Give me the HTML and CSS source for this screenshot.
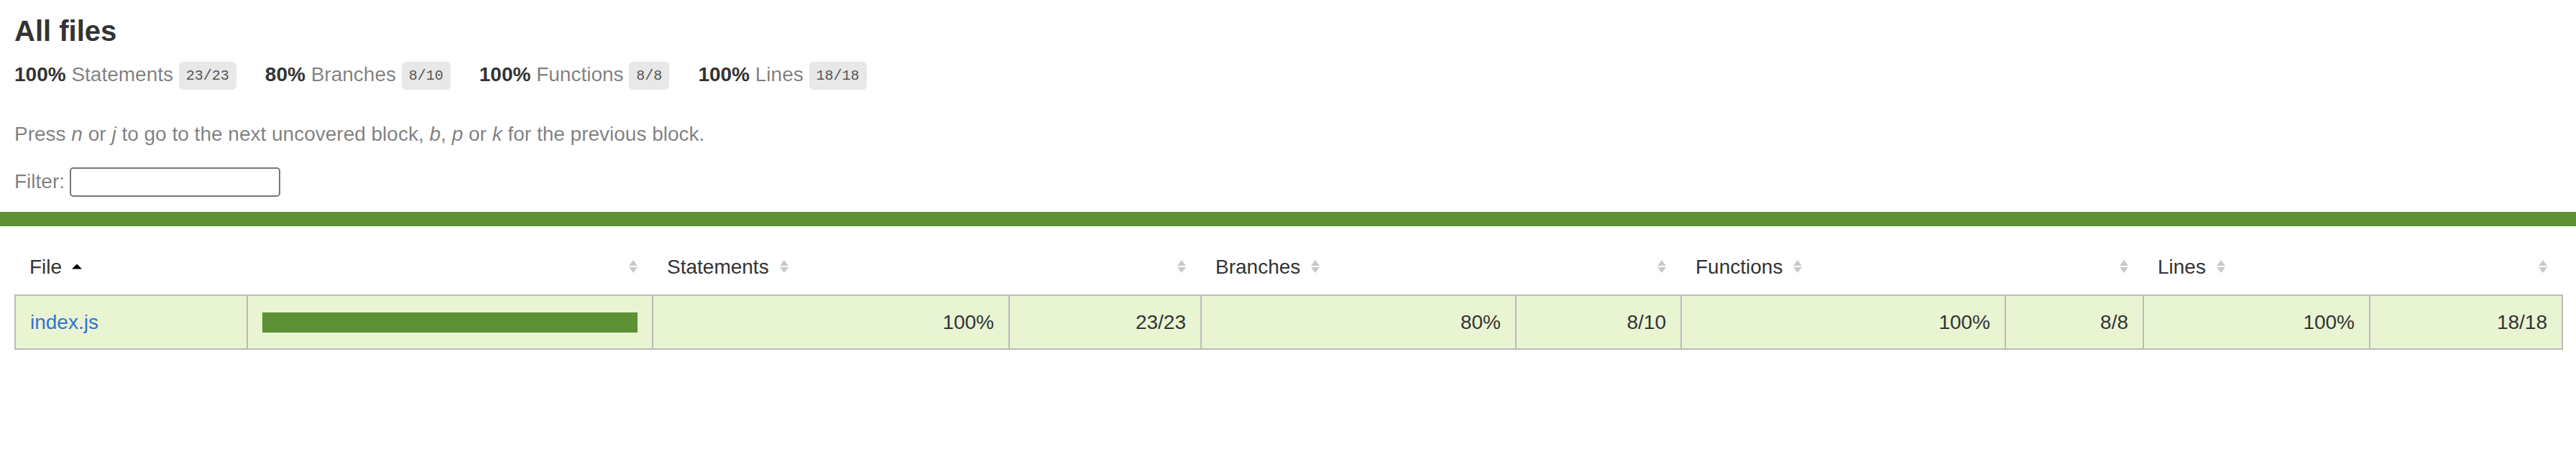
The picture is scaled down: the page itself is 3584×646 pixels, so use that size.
FILE: index.html
```html
<!DOCTYPE html>
<html lang="en">
<head>
<meta charset="utf-8">
<title>Code coverage report for All files</title>
<link rel="stylesheet" href="styles.css">
</head>
<body>
<div class="wrapper">
  <div class="pad1">
    <h1>All files</h1>
    <div class="stats">
      <div class="stat">
        <span class="strong">100% </span>
        <span class="quiet">Statements</span>
        <span class="fraction">23/23</span>
      </div>
      <div class="stat">
        <span class="strong">80% </span>
        <span class="quiet">Branches</span>
        <span class="fraction">8/10</span>
      </div>
      <div class="stat">
        <span class="strong">100% </span>
        <span class="quiet">Functions</span>
        <span class="fraction">8/8</span>
      </div>
      <div class="stat">
        <span class="strong">100% </span>
        <span class="quiet">Lines</span>
        <span class="fraction">18/18</span>
      </div>
    </div>
    <p class="quiet hint">Press <em>n</em> or <em>j</em> to go to the next uncovered block, <em>b</em>, <em>p</em> or <em>k</em> for the previous block.</p>
    <div class="quiet filter">Filter:<input type="search" class="file-search" aria-label="Filter"></div>
  </div>
  <div class="status-line high"></div>
  <div class="pad1">
    <table class="coverage-summary">
      <thead>
        <tr>
          <th class="file col-file">File<svg class="sorter" viewBox="0 0 14 20" width="14" height="20"><path d="M7 6.5 L14 13.5 H0 Z" fill="#000"/></svg></th>
          <th class="pic col-pic"><svg class="sorter" viewBox="0 0 14 20" width="14" height="20"><path d="M7 1 L13 9 H1 Z M1 11 H13 L7 19 Z" fill="#c9c9c9"/></svg></th>
          <th class="pct col-stmt-pct">Statements<svg class="sorter" viewBox="0 0 14 20" width="14" height="20"><path d="M7 1 L13 9 H1 Z M1 11 H13 L7 19 Z" fill="#c9c9c9"/></svg></th>
          <th class="abs col-stmt-abs"><svg class="sorter" viewBox="0 0 14 20" width="14" height="20"><path d="M7 1 L13 9 H1 Z M1 11 H13 L7 19 Z" fill="#c9c9c9"/></svg></th>
          <th class="pct col-br-pct">Branches<svg class="sorter" viewBox="0 0 14 20" width="14" height="20"><path d="M7 1 L13 9 H1 Z M1 11 H13 L7 19 Z" fill="#c9c9c9"/></svg></th>
          <th class="abs col-br-abs"><svg class="sorter" viewBox="0 0 14 20" width="14" height="20"><path d="M7 1 L13 9 H1 Z M1 11 H13 L7 19 Z" fill="#c9c9c9"/></svg></th>
          <th class="pct col-fn-pct">Functions<svg class="sorter" viewBox="0 0 14 20" width="14" height="20"><path d="M7 1 L13 9 H1 Z M1 11 H13 L7 19 Z" fill="#c9c9c9"/></svg></th>
          <th class="abs col-fn-abs"><svg class="sorter" viewBox="0 0 14 20" width="14" height="20"><path d="M7 1 L13 9 H1 Z M1 11 H13 L7 19 Z" fill="#c9c9c9"/></svg></th>
          <th class="pct col-ln-pct">Lines<svg class="sorter" viewBox="0 0 14 20" width="14" height="20"><path d="M7 1 L13 9 H1 Z M1 11 H13 L7 19 Z" fill="#c9c9c9"/></svg></th>
          <th class="abs col-ln-abs"><svg class="sorter" viewBox="0 0 14 20" width="14" height="20"><path d="M7 1 L13 9 H1 Z M1 11 H13 L7 19 Z" fill="#c9c9c9"/></svg></th>
        </tr>
      </thead>
      <tbody>
        <tr>
          <td class="file high"><a href="#">index.js</a></td>
          <td class="pic high"><div class="chart"><div class="cover-fill cover-full" style="width: 100%"></div><div class="cover-empty" style="width: 0%"></div></div></td>
          <td class="pct high">100%</td>
          <td class="abs high">23/23</td>
          <td class="pct high">80%</td>
          <td class="abs high">8/10</td>
          <td class="pct high">100%</td>
          <td class="abs high">8/8</td>
          <td class="pct high">100%</td>
          <td class="abs high">18/18</td>
        </tr>
      </tbody>
    </table>
  </div>
</div>
</body>
</html>
```
FILE: styles.css
```css
html, body {
  margin: 0;
  padding: 0;
  background: #fff;
}
body {
  font-family: "Liberation Sans", Arial, Helvetica, sans-serif;
  font-size: 28px;
  line-height: 1.165;
  color: #333;
}
.pad1 {
  padding: 20px;
}
h1 {
  font-size: 40px;
  line-height: 47px;
  margin: 0;
  font-weight: bold;
}
.stats {
  display: flex;
}
.stat {
  padding: 21px 40px 20px 0;
}
.strong {
  font-weight: bold;
}
.quiet {
  color: rgba(0, 0, 0, 0.5);
}
.fraction {
  font-family: "Liberation Mono", Consolas, Menlo, monospace;
  font-size: 20px;
  color: #555;
  background: #e8e8e8;
  padding: 8px 10px;
  border-radius: 6px;
  vertical-align: middle;
}
.hint {
  margin: 30px 0 26px;
}
.filter {
  display: flex;
  align-items: center;
  gap: 7px;
  padding: 4px 0 1px;
}
.file-search {
  width: 293px;
  height: 41px;
  box-sizing: border-box;
  border: 2px solid #767676;
  border-radius: 5px;
  margin: 0;
  padding: 2px 6px;
  font: 26px "Liberation Sans", Arial, sans-serif;
  background: #fff;
}
.status-line {
  height: 20px;
}
.status-line.high {
  background: #5e9035;
}
.table-wrap {
  padding: 21px 20px 20px;
}
.coverage-summary {
  border-collapse: collapse;
  width: 100%;
  table-layout: fixed;
}
.coverage-summary tr {
  border-bottom: 2px solid #bbb;
}
.coverage-summary tbody {
  border: 2px solid #bbb;
}
.coverage-summary td,
.coverage-summary th {
  padding: 20px;
  box-sizing: border-box;
}
.coverage-summary th {
  padding-top: 21px;
  padding-bottom: 21px;
}
.coverage-summary td {
  border-right: 2px solid #bbb;
  padding-top: 21px;
}
.coverage-summary td:last-child {
  border-right: none;
}
.coverage-summary th {
  text-align: left;
  font-weight: normal;
  white-space: nowrap;
}
.coverage-summary th.pic,
.coverage-summary th.abs,
.coverage-summary td.pct,
.coverage-summary td.abs {
  text-align: right;
}
.coverage-summary td.file {
  white-space: nowrap;
}
.col-file { width: 323px; }
.col-pic { width: 564px; }
.col-stmt-pct { width: 496px; }
.col-stmt-abs { width: 267px; }
.col-br-pct { width: 438px; }
.col-br-abs { width: 230px; }
.col-fn-pct { width: 451px; }
.col-fn-abs { width: 192px; }
.col-ln-pct { width: 315px; }
.col-ln-abs { width: 268px; }
.high {
  background: #e9f4d3;
}
.chart {
  line-height: 0;
  border: 2px solid #5e9035;
}
.cover-fill,
.cover-empty {
  display: inline-block;
  height: 24px;
  vertical-align: top;
}
.cover-fill {
  background: #5e9035;
}
.cover-empty {
  background: #fff;
}
a {
  color: #3172d2;
  text-decoration: none;
}
.sorter {
  display: inline-block;
  width: 14px;
  height: 20px;
  margin-left: 14px;
  vertical-align: baseline;
}
```
